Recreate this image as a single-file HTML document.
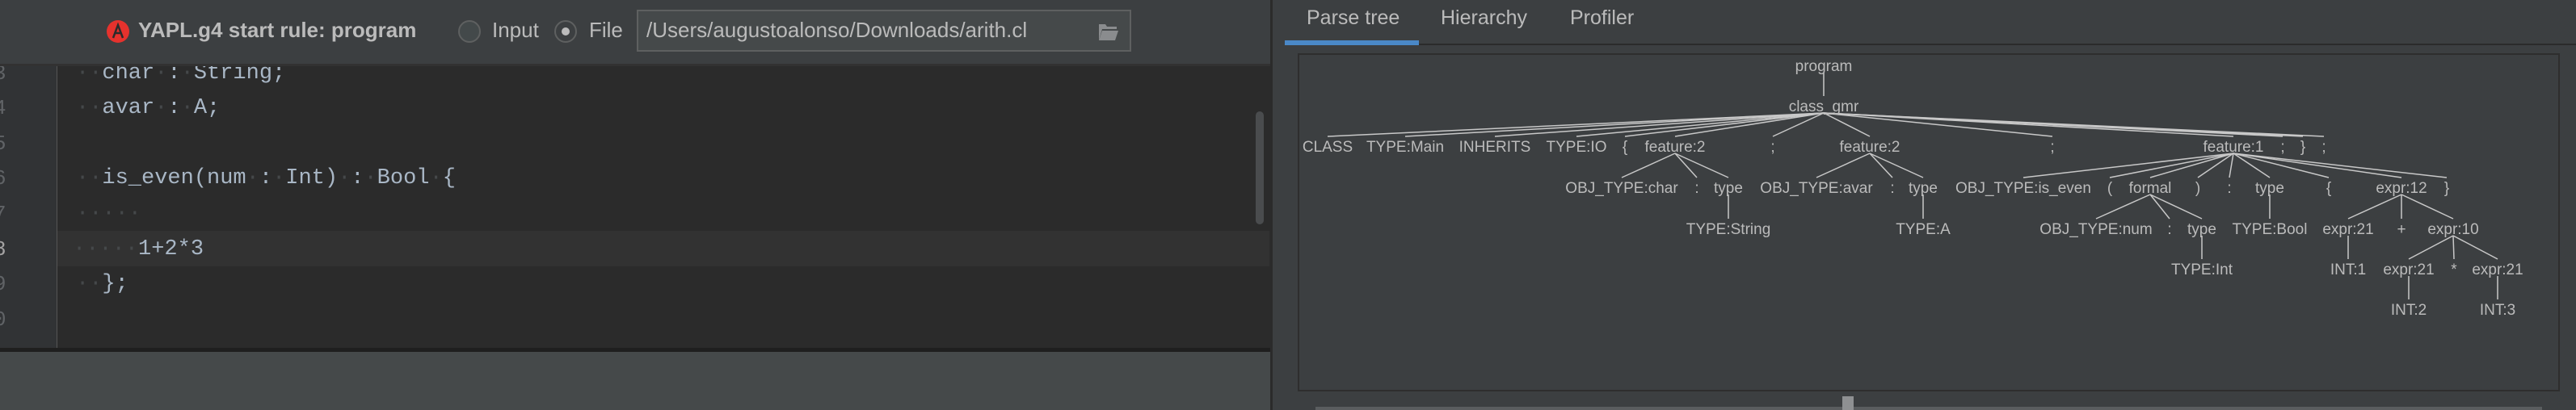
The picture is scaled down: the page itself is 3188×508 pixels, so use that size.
<!DOCTYPE html>
<html><head><meta charset="utf-8"><style>
body{margin:0;width:3188px;height:508px;background:#3c3f41;position:relative;overflow:hidden;font-family:"Liberation Sans",sans-serif;}
.a{position:absolute;}
.code{font-family:"Liberation Mono",monospace;font-size:27px;color:#a9b7c6;white-space:pre;}
.ln{font-family:"Liberation Mono",monospace;font-size:26px;color:#606366;}
.dot{color:#45484a;}
</style></head><body>
<!-- left header -->
<div class="a" style="left:0;top:0;width:1572px;height:80px;background:#3c3f41"></div>
<svg class="a" style="left:132px;top:25px" width="28" height="28" viewBox="0 0 28 28"><circle cx="14" cy="14" r="14" fill="#e5322d"/><path d="M8 22 L14 6 L20 22 M11 16 L17 16" stroke="#2b2b2b" stroke-width="2.5" fill="none"/></svg>
<div class="a" style="left:171px;top:22px;font-size:26px;font-weight:bold;color:#bbbbbb;white-space:nowrap">YAPL.g4 start rule: program</div>
<div class="a" style="left:567px;top:25px;width:24px;height:24px;border:2px solid #5e6060;border-radius:50%;background:#43494a"></div>
<div class="a" style="left:609px;top:22px;font-size:26px;color:#bbbbbb">Input</div>
<div class="a" style="left:686px;top:25px;width:24px;height:24px;border:2px solid #5e6060;border-radius:50%;background:#3c3f41"></div>
<div class="a" style="left:695px;top:34px;width:10px;height:10px;border-radius:50%;background:#bbbbbb"></div>
<div class="a" style="left:729px;top:22px;font-size:26px;color:#bbbbbb">File</div>
<div class="a" style="left:788px;top:12px;width:608px;height:48px;border:2px solid #5e6060;background:#45494a"></div>
<div class="a" style="left:800px;top:22px;font-size:26px;color:#bbbbbb;white-space:nowrap">/Users/augustoalonso/Downloads/arith.cl</div>
<svg class="a" style="left:1358px;top:28px" width="28" height="24" viewBox="0 0 28 24"><path d="M2 2 H10 L12 5 H24 V8 H6 L2 22 Z" fill="#8a8c8e"/><path d="M6 10 H26 L22 22 H2 Z" fill="#8a8c8e"/></svg>
<div class="a" style="left:0;top:79px;width:1572px;height:3px;background:#323232"></div>
<!-- editor -->
<div class="a" style="left:0;top:82px;width:1572px;height:350px;background:#2b2b2b;overflow:hidden">
 <div class="a" style="left:0;top:0;width:70px;height:350px;background:#313335;border-right:1px solid #555"></div>
 <div class="a" style="left:71px;top:204px;width:1500px;height:44px;background:#323232"></div>
 <div class="a ln" style="left:-8px;top:-6px">3</div>
 <div class="a ln" style="left:-8px;top:37px">4</div>
 <div class="a ln" style="left:-8px;top:81px">5</div>
 <div class="a ln" style="left:-8px;top:124px">6</div>
 <div class="a ln" style="left:-8px;top:168px">7</div>
 <div class="a ln" style="left:-8px;top:212px;color:#a4a3a3">8</div>
 <div class="a ln" style="left:-8px;top:255px">9</div>
 <div class="a ln" style="left:-8px;top:299px">0</div>
 <div class="a code" style="left:94px;top:-6px"><span class="dot">··</span>char<span class="dot">·</span>:<span class="dot">·</span>String;</div>
 <div class="a code" style="left:94px;top:37px"><span class="dot">··</span>avar<span class="dot">·</span>:<span class="dot">·</span>A;</div>
 <div class="a code" style="left:94px;top:124px"><span class="dot">··</span>is_even(num<span class="dot">·</span>:<span class="dot">·</span>Int)<span class="dot">·</span>:<span class="dot">·</span>Bool<span class="dot">·</span>{</div>
 <div class="a code" style="left:94px;top:168px"><span class="dot">·····</span></div>
 <div class="a code" style="left:90px;top:212px"><span class="dot">·····</span>1+2*3</div>
 <div class="a code" style="left:94px;top:255px"><span class="dot">··</span>};</div>
 <div class="a" style="left:1554px;top:56px;width:10px;height:140px;border-radius:5px;background:#4a4c4e"></div>
</div>
<div class="a" style="left:0;top:431px;width:1572px;height:5px;background:#1f1f1f"></div>
<div class="a" style="left:0;top:436px;width:1572px;height:72px;background:#45494a"></div>
<div class="a" style="left:1572px;top:0;width:3px;height:508px;background:#2b2b2b"></div>
<!-- right -->
<div class="a" style="left:1617px;top:8px;font-size:25px;color:#bbbbbb">Parse tree</div>
<div class="a" style="left:1783px;top:8px;font-size:25px;color:#bbbbbb">Hierarchy</div>
<div class="a" style="left:1943px;top:8px;font-size:25px;color:#bbbbbb">Profiler</div>
<div class="a" style="left:1590px;top:54px;width:1598px;height:2px;background:#2b2b2b"></div>
<div class="a" style="left:1590px;top:50px;width:166px;height:6px;background:#4a88c7"></div>
<div class="a" style="left:1606px;top:66px;width:1558px;height:415px;border:2px solid #2e2e2e;background:#3c3f41"></div>
<div class="a" style="left:1628px;top:504px;width:1518px;height:4px;background:#5a5d5f"></div>
<div class="a" style="left:2280px;top:491px;width:14px;height:17px;background:#8e9092"></div>
<svg class="a" id="t" style="left:1580px;top:0" width="1608" height="508" font-family="Liberation Sans, sans-serif" font-size="19" fill="#bbbbbb"></svg>
<script>
var N={
p:[677,81,'program'],c:[677,131,'class_gmr'],
a1:[63,181,'CLASS'],a2:[159,181,'TYPE:Main'],a3:[270,181,'INHERITS'],a4:[371,181,'TYPE:IO'],a5:[431,181,'{'],f1:[493,181,'feature:2'],a6:[614,181,';'],f2:[734,181,'feature:2'],a7:[960,181,';'],f3:[1184,181,'feature:1'],a8:[1245,181,';'],a9:[1270,181,'}'],a10:[1296,181,';'],
b1:[427,232,'OBJ_TYPE:char'],b2:[520,232,':'],b3:[559,232,'type'],
b4:[668,232,'OBJ_TYPE:avar'],b5:[762,232,':'],b6:[800,232,'type'],
b7:[924,232,'OBJ_TYPE:is_even'],b8:[1031,232,'('],b9:[1081,232,'formal'],b10:[1140,232,')'],b11:[1179,232,':'],b12:[1229,232,'type'],b13:[1302,232,'{'],b14:[1392,232,'expr:12'],b15:[1448,232,'}'],
c1:[559,283,'TYPE:String'],c2:[800,283,'TYPE:A'],c3:[1014,283,'OBJ_TYPE:num'],c4:[1105,283,':'],c5:[1145,283,'type'],c6:[1229,283,'TYPE:Bool'],c7:[1326,283,'expr:21'],c8:[1392,283,'+'],c9:[1456,283,'expr:10'],
d1:[1145,333,'TYPE:Int'],d2:[1326,333,'INT:1'],d3:[1401,333,'expr:21'],d4:[1457,333,'*'],d5:[1511,333,'expr:21'],
e1:[1401,383,'INT:2'],e2:[1511,383,'INT:3']};
var E={p:['c'],c:['a1','a2','a3','a4','a5','f1','a6','f2','a7','f3','a8','a9','a10'],f1:['b1','b2','b3'],f2:['b4','b5','b6'],
f3:['b7','b8','b9','b10','b11','b12','b13','b14','b15'],b3:['c1'],b6:['c2'],b9:['c3','c4','c5'],b12:['c6'],b14:['c7','c8','c9'],
c5:['d1'],c7:['d2'],c9:['d3','d4','d5'],d3:['e1'],d5:['e2']};
var s='';
for(var k in E){var P=N[k];E[k].forEach(function(q){var C=N[q];s+='<line x1="'+P[0]+'" y1="'+(P[1]+9)+'" x2="'+C[0]+'" y2="'+(C[1]-12)+'" stroke="#c8c8c8" stroke-width="1.5"/>';});}
for(var k in N){var n=N[k];s+='<text x="'+n[0]+'" y="'+(n[1]+7)+'" text-anchor="middle">'+n[2]+'</text>';}
document.getElementById('t').innerHTML=s;
</script>
</body></html>
